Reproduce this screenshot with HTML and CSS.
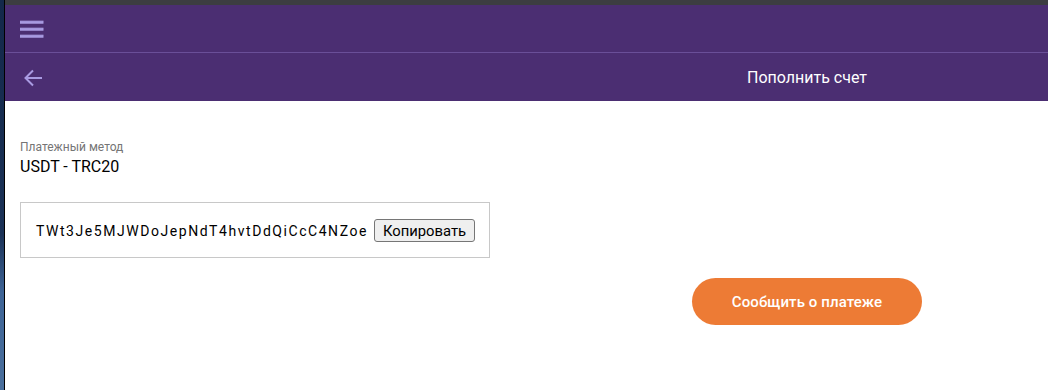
FILE: index.html
```html
<!DOCTYPE html>
<html lang="ru">
<head>
<meta charset="utf-8">
<title>Пополнить счет</title>
<link rel="stylesheet" href="styles.css">
</head>
<body>
<div class="desktop"></div>
<div class="window">
  <div class="tabstrip"></div>
  <header class="appbar">
    <div class="appbar-top">
      <svg class="icon" width="24" height="18" viewBox="0 0 24 18"><rect x="0" y="1.2" width="23" height="2"/><rect x="0" y="8.2" width="23" height="2"/><rect x="0" y="15.2" width="23" height="2"/></svg>
    </div>
    <div class="appbar-bottom">
      <svg class="icon back" width="20" height="20" viewBox="0 0 20 20"><path d="M19 10H3.5M10 2.5L2.5 10 10 17.5" fill="none" stroke-width="2"/></svg>
      <span class="title">Пополнить счет</span>
    </div>
  </header>
  <main class="content">
    <div class="label">Платежный метод</div>
    <div class="value">USDT - TRC20</div>
    <div class="address-box">
      <span class="address">TWt3Je5MJWDoJepNdT4hvtDdQiCcC4NZoe</span>
      <button class="copy">Копировать</button>
    </div>
    <div class="actions">
      <button class="report">Сообщить о платеже</button>
    </div>
  </main>
</div>
</body>
</html>
```
FILE: styles.css
```css
html, body { margin: 0; padding: 0; height: 100%; }
body {
  display: flex;
  width: 1048px;
  height: 390px;
  overflow: hidden;
  font-family: Roboto, "Liberation Sans", sans-serif;
  background: #fff;
}
.desktop {
  width: 4px;
  flex: none;
  background: linear-gradient(#13284a 0%, #1b3257 60%, #3e6496 75%, #4a6f9c 100%);
  border-right: 1px solid #000;
}
.window { flex: 1; display: flex; flex-direction: column; min-width: 0; }
.tabstrip { height: 5px; background: #3c3d41; flex: none; }
.appbar { background: #4b2e72; }
.appbar-top {
  height: 47px;
  display: flex;
  align-items: center;
  padding-left: 15px;
  border-bottom: 1px solid #6a4f98;
}
.icon { fill: #a99be2; stroke: #a99be2; }
.appbar-top .icon { margin-top: 1px; }
.appbar-bottom {
  height: 48px;
  display: flex;
  align-items: center;
  padding-left: 18px;
}
.back { margin-top: 1px; }
.title {
  margin-left: 704px;
  color: #fff;
  font-size: 16px;
  margin-top: 1px;
}
.content { padding: 38px 15px 0; }
.label { color: #757575; font-size: 12px; line-height: 16px; }
.value { color: #000; font-size: 16px; line-height: 20px; margin-top: 2px; }
.address-box {
  margin-top: 25px;
  border: 1px solid #c8c8c8;
  display: flex;
  align-items: center;
  padding-left: 15px;
  box-sizing: border-box;
  width: 470px;
  height: 56px;
}
.address { font-size: 14px; letter-spacing: 1.55px; color: #000; margin-top: 1px; }
.copy {
  margin-left: 6px;
  font-family: Roboto, "Liberation Sans", sans-serif;
  font-size: 14.8px;
  padding: 0 8px;
  height: 23px;
  margin-top: 1px;
  background: #efefef;
  border: 1px solid #767676;
  border-radius: 3px;
  color: #000;
}
.actions { display: flex; padding-left: 672px; margin-top: 20px; }
.report {
  width: 230px;
  height: 47px;
  border: none;
  border-radius: 24px;
  background: #ed7b35;
  color: #fff;
  font-family: Roboto, "Liberation Sans", sans-serif;
  font-size: 15px;
  font-weight: 500;
  letter-spacing: 0.1px;
}
```
